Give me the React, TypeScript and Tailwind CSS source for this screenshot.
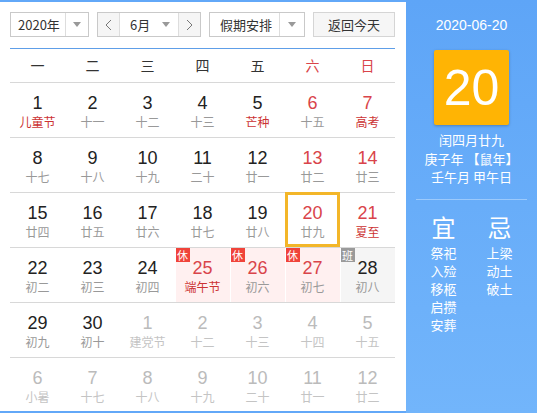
import React from 'react';

type Day = {
  n: number;
  lunar: string;
  other?: boolean;
  red?: boolean;
  fest?: boolean;
  badge?: '休' | '班';
  today?: boolean;
};

const WEEK = ['一', '二', '三', '四', '五', '六', '日'];

const ROWS: Day[][] = [
  [
    { n: 1, lunar: '儿童节', fest: true },
    { n: 2, lunar: '十一' },
    { n: 3, lunar: '十二' },
    { n: 4, lunar: '十三' },
    { n: 5, lunar: '芒种', fest: true },
    { n: 6, lunar: '十五', red: true },
    { n: 7, lunar: '高考', red: true, fest: true },
  ],
  [
    { n: 8, lunar: '十七' },
    { n: 9, lunar: '十八' },
    { n: 10, lunar: '十九' },
    { n: 11, lunar: '二十' },
    { n: 12, lunar: '廿一' },
    { n: 13, lunar: '廿二', red: true },
    { n: 14, lunar: '廿三', red: true },
  ],
  [
    { n: 15, lunar: '廿四' },
    { n: 16, lunar: '廿五' },
    { n: 17, lunar: '廿六' },
    { n: 18, lunar: '廿七' },
    { n: 19, lunar: '廿八' },
    { n: 20, lunar: '廿九', red: true, today: true },
    { n: 21, lunar: '夏至', red: true, fest: true },
  ],
  [
    { n: 22, lunar: '初二' },
    { n: 23, lunar: '初三' },
    { n: 24, lunar: '初四' },
    { n: 25, lunar: '端午节', red: true, fest: true, badge: '休' },
    { n: 26, lunar: '初六', red: true, badge: '休' },
    { n: 27, lunar: '初七', red: true, badge: '休' },
    { n: 28, lunar: '初八', badge: '班' },
  ],
  [
    { n: 29, lunar: '初九' },
    { n: 30, lunar: '初十' },
    { n: 1, lunar: '建党节', other: true },
    { n: 2, lunar: '十二', other: true },
    { n: 3, lunar: '十三', other: true },
    { n: 4, lunar: '十四', other: true },
    { n: 5, lunar: '十五', other: true },
  ],
  [
    { n: 6, lunar: '小暑', other: true },
    { n: 7, lunar: '十七', other: true },
    { n: 8, lunar: '十八', other: true },
    { n: 9, lunar: '十九', other: true },
    { n: 10, lunar: '二十', other: true },
    { n: 11, lunar: '廿一', other: true },
    { n: 12, lunar: '廿二', other: true },
  ],
];

const YI = ['祭祀', '入殓', '移柩', '启攒', '安葬'];
const JI = ['上梁', '动土', '破土'];

// small grey triangle used by the selects
function Caret() {
  return (
    <svg width="8" height="5" viewBox="0 0 8 5">
      <path d="M0 0 L8 0 L4 5 Z" fill="#999" />
    </svg>
  );
}

function Chevron({ dir }: { dir: 'l' | 'r' }) {
  return (
    <svg width="7" height="12" viewBox="0 0 7 12">
      <path
        d={dir === 'l' ? 'M6 1 L1 6 L6 11' : 'M1 1 L6 6 L1 11'}
        fill="none"
        stroke="#777"
        strokeWidth="1"
      />
    </svg>
  );
}

function Cell({ d }: { d: Day }) {
  let numColor = 'text-[#222]';
  let lunarColor = 'text-[#999]';
  if (d.red) numColor = 'text-[#d9444a]';
  if (d.fest) lunarColor = 'text-[#cc3333]';
  if (d.other) {
    numColor = 'text-[#bbb]';
    lunarColor = 'text-[#c4c4c4]';
  }
  let bg = '';
  if (d.badge === '休') bg = 'bg-[#fff0f0]';
  if (d.badge === '班') bg = 'bg-[#f5f5f5]';

  return (
    <div className={`relative flex flex-col items-center justify-center pt-[3px] ${bg} ${d.badge ? 'mx-[0.5px]' : ''}`}>
      {d.today && <div className="absolute -top-px inset-x-0 bottom-0 border-[3px] border-[#f3b629]" />}
      {d.badge && (
        <div
          className={`absolute top-0 left-0 w-[14px] h-[14px] text-[11px] leading-[14px] text-center text-white ${
            d.badge === '休' ? 'bg-[#f0433a]' : 'bg-[#9a9a9a]'
          }`}
        >
          {d.badge}
        </div>
      )}
      <div className={`text-[18px] leading-[20px] font-['Liberation_Sans',sans-serif] ${numColor}`}>{d.n}</div>
      <div className={`text-[12px] leading-[17px] ${lunarColor}`}>{d.lunar}</div>
    </div>
  );
}

export default function App() {
  return (
    <div className="flex w-[537px] h-[413px] bg-[#62a8f8] font-['Liberation_Sans','Noto_Sans_CJK_SC',sans-serif] overflow-hidden">
      {/* calendar */}
      <div className="w-[406px] my-[2px] bg-white pl-[10px] pr-[11px]">
        <div className="flex items-center gap-[8px] mt-[10px] h-[25px] text-[13px] text-[#333] whitespace-nowrap font-['Noto_Sans_CJK_SC',sans-serif]">
          <div className="flex h-full w-[79px] border border-[#c9c9c9]">
            <div className="flex items-center pl-[7px] w-[55px] border-r border-[#ddd]">2020年</div>
            <div className="flex flex-1 items-center justify-center">
              <Caret />
            </div>
          </div>
          <div className="flex h-full w-[104px] border border-[#c9c9c9]">
            <div className="flex items-center justify-center w-[22px] bg-[#f5f5f5] border-r border-[#ddd]">
              <Chevron dir="l" />
            </div>
            <div className="flex items-center flex-1 pl-[10px] gap-[12px]">
              <span>6月</span>
              <Caret />
            </div>
            <div className="flex items-center justify-center w-[22px] bg-[#f5f5f5] border-l border-[#ddd]">
              <Chevron dir="r" />
            </div>
          </div>
          <div className="flex h-full w-[96px] border border-[#c9c9c9]">
            <div className="flex items-center pl-[10px] w-[70px] border-r border-[#ddd]">假期安排</div>
            <div className="flex flex-1 items-center justify-center">
              <Caret />
            </div>
          </div>
          <div className="flex items-center justify-center h-full w-[82px] border border-[#d5d5d5] bg-[#f6f6f6]">
            返回今天
          </div>
        </div>

        <div className="mt-[11px] h-px bg-[#5e9ee8]" />
        <div className="grid grid-cols-7 h-[33px] items-center text-[14px] font-['Noto_Sans_CJK_SC',sans-serif]">
          {WEEK.map((w, i) => (
            <div key={w} className={`text-center ${i >= 5 ? 'text-[#d9444a]' : 'text-[#333]'}`}>
              {w}
            </div>
          ))}
        </div>

        <div className="font-['Noto_Sans_CJK_SC',sans-serif]">
          {ROWS.map((row, r) => (
            <div key={r} className="grid grid-cols-7 h-[55px] border-t border-[#d8d8d8]">
              {row.map((d, i) => (
                <Cell key={i} d={d} />
              ))}
            </div>
          ))}
        </div>
      </div>

      {/* side panel */}
      <div className="flex-1 flex flex-col items-center bg-gradient-to-b from-[#5ea5f7] to-[#72b5fb] text-white font-['Noto_Sans_CJK_SC',sans-serif]">
        <div className="mt-[15px] text-[14px] leading-[20px] font-['Liberation_Sans',sans-serif]">2020-06-20</div>
        <div className="mt-[15px] w-[75px] h-[75px] flex items-center justify-center bg-[#ffb404] rounded-[2px] shadow-[0_1px_3px_rgba(0,0,0,0.25)]">
          <span className="text-[50px] leading-none font-['Liberation_Sans',sans-serif]">20</span>
        </div>
        <div className="mt-[6px] text-[13px] leading-[18.5px] text-center">
          <div>闰四月廿九</div>
          <div>庚子年 【鼠年】</div>
          <div>壬午月 甲午日</div>
        </div>
        <div className="mt-[12px] w-[111px] h-px bg-[#9ccafc]" />
        <div className="grid grid-cols-2 w-[112px] mt-[12px]">
          <div className="flex flex-col items-center">
            <div className="text-[24px] leading-[30px]">宜</div>
            <div className="mt-[2px] text-[13px] leading-[18px] text-center">
              {YI.map((t) => (
                <div key={t}>{t}</div>
              ))}
            </div>
          </div>
          <div className="flex flex-col items-center">
            <div className="text-[24px] leading-[30px]">忌</div>
            <div className="mt-[2px] text-[13px] leading-[18px] text-center">
              {JI.map((t) => (
                <div key={t}>{t}</div>
              ))}
            </div>
          </div>
        </div>
      </div>
    </div>
  );
}
